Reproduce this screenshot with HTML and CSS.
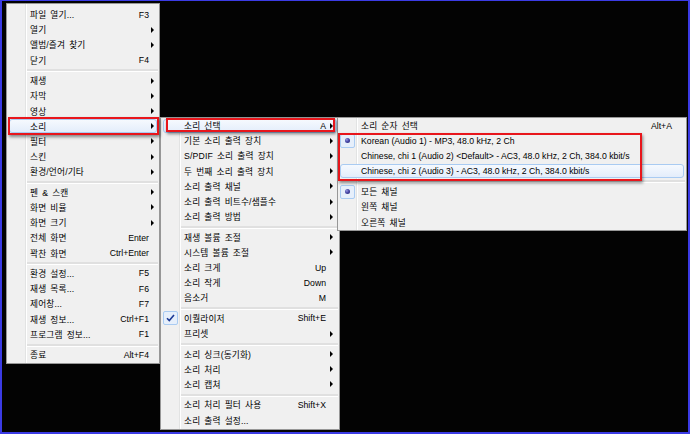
FILE: index.html
```html
<!DOCTYPE html>
<html lang="ko">
<head>
<meta charset="utf-8">
<title>메뉴</title>
<link rel="stylesheet" href="styles.css">
</head>
<body>
<div class="screen">
  <div class="menu m1">
    <div class="item"><span class="label">파일 열기...</span><span class="key">F3</span><span class="arr"></span></div>
    <div class="item sub"><span class="label">열기</span><span class="arr"></span></div>
    <div class="item sub"><span class="label">앨범/즐겨 찾기</span><span class="arr"></span></div>
    <div class="item"><span class="label">닫기</span><span class="key">F4</span><span class="arr"></span></div>
    <div class="sep"></div>
    <div class="item sub"><span class="label">재생</span><span class="arr"></span></div>
    <div class="item sub"><span class="label">자막</span><span class="arr"></span></div>
    <div class="item sub"><span class="label">영상</span><span class="arr"></span></div>
    <div class="item sub hot"><span class="label">소리</span><span class="arr"></span></div>
    <div class="item sub"><span class="label">필터</span><span class="arr"></span></div>
    <div class="item sub"><span class="label">스킨</span><span class="arr"></span></div>
    <div class="item sub"><span class="label">환경/언어/기타</span><span class="arr"></span></div>
    <div class="sep"></div>
    <div class="item sub"><span class="label">펜 &amp; 스캔</span><span class="arr"></span></div>
    <div class="item sub"><span class="label">화면 비율</span><span class="arr"></span></div>
    <div class="item sub"><span class="label">화면 크기</span><span class="arr"></span></div>
    <div class="item"><span class="label">전체 화면</span><span class="key">Enter</span><span class="arr"></span></div>
    <div class="item"><span class="label">꽉찬 화면</span><span class="key">Ctrl+Enter</span><span class="arr"></span></div>
    <div class="sep"></div>
    <div class="item"><span class="label">환경 설정...</span><span class="key">F5</span><span class="arr"></span></div>
    <div class="item"><span class="label">재생 목록...</span><span class="key">F6</span><span class="arr"></span></div>
    <div class="item"><span class="label">제어창...</span><span class="key">F7</span><span class="arr"></span></div>
    <div class="item"><span class="label">재생 정보...</span><span class="key">Ctrl+F1</span><span class="arr"></span></div>
    <div class="item"><span class="label">프로그램 정보...</span><span class="key">F1</span><span class="arr"></span></div>
    <div class="sep"></div>
    <div class="item"><span class="label">종료</span><span class="key">Alt+F4</span><span class="arr"></span></div>
  </div>

  <div class="menu m2">
    <div class="item sub hot"><span class="label">소리 선택</span><span class="key">A</span><span class="arr"></span></div>
    <div class="item sub"><span class="label">기본 소리 출력 장치</span><span class="arr"></span></div>
    <div class="item sub"><span class="label">S/PDIF 소리 출력 장치</span><span class="arr"></span></div>
    <div class="item sub"><span class="label">두 번째 소리 출력 장치</span><span class="arr"></span></div>
    <div class="item sub"><span class="label">소리 출력 채널</span><span class="arr"></span></div>
    <div class="item sub"><span class="label">소리 출력 비트수/샘플수</span><span class="arr"></span></div>
    <div class="item sub"><span class="label">소리 출력 방법</span><span class="arr"></span></div>
    <div class="sep"></div>
    <div class="item sub"><span class="label">재생 볼륨 조절</span><span class="arr"></span></div>
    <div class="item sub"><span class="label">시스템 볼륨 조절</span><span class="arr"></span></div>
    <div class="item"><span class="label">소리 크게</span><span class="key">Up</span><span class="arr"></span></div>
    <div class="item"><span class="label">소리 작게</span><span class="key">Down</span><span class="arr"></span></div>
    <div class="item"><span class="label">음소거</span><span class="key">M</span><span class="arr"></span></div>
    <div class="sep"></div>
    <div class="item"><span class="mark"><svg width="9" height="8" viewBox="0 0 9 8"><path d="M1 4.3 L3.3 6.6 L8 1" fill="none" stroke="#1c3a96" stroke-width="1.6"/></svg></span><span class="label">이퀄라이저</span><span class="key">Shift+E</span><span class="arr"></span></div>
    <div class="item sub"><span class="label">프리셋</span><span class="arr"></span></div>
    <div class="sep"></div>
    <div class="item sub"><span class="label">소리 싱크(동기화)</span><span class="arr"></span></div>
    <div class="item sub"><span class="label">소리 처리</span><span class="arr"></span></div>
    <div class="item sub"><span class="label">소리 캡쳐</span><span class="arr"></span></div>
    <div class="sep"></div>
    <div class="item"><span class="label">소리 처리 필터 사용</span><span class="key">Shift+X</span><span class="arr"></span></div>
    <div class="item"><span class="label">소리 출력 설정...</span><span class="arr"></span></div>
  </div>

  <div class="menu m3">
    <div class="item"><span class="label ko">소리 순자 선택</span><span class="key">Alt+A</span><span class="arr"></span></div>
    <div class="item"><span class="mark"><span class="dot"></span></span><span class="label">Korean (Audio 1) - MP3, 48.0 kHz, 2 Ch</span><span class="arr"></span></div>
    <div class="item"><span class="label">Chinese, chi 1 (Audio 2) &lt;Default&gt; - AC3, 48.0 kHz, 2 Ch, 384.0 kbit/s</span><span class="arr"></span></div>
    <div class="item hot"><span class="label">Chinese, chi 2 (Audio 3) - AC3, 48.0 kHz, 2 Ch, 384.0 kbit/s</span><span class="arr"></span></div>
    <div class="sep"></div>
    <div class="item"><span class="mark"><span class="dot"></span></span><span class="label ko">모든 채널</span><span class="arr"></span></div>
    <div class="item"><span class="label ko">왼쪽 채널</span><span class="arr"></span></div>
    <div class="item"><span class="label ko">오른쪽 채널</span><span class="arr"></span></div>
  </div>

  <div class="note n1"></div>
  <div class="note n2"></div>
  <div class="note n3"></div>
</div>
</body>
</html>
```

FILE: styles.css
```css
* { box-sizing: border-box; margin: 0; padding: 0; }
html, body { width: 690px; height: 434px; overflow: hidden; background: #000; }
body {
  font-family: "Liberation Sans", "Noto Sans CJK KR", sans-serif;
  font-size: 8.7px;
  color: #000;
}
.screen { position: relative; width: 690px; height: 434px; background: #030303; overflow: hidden; }
.screen::after {
  content: ""; position: absolute; inset: 0;
  border-style: solid; border-color: #3b3be4; border-width: 1px 2px 2px 2px;
  pointer-events: none; z-index: 10;
}

.menu {
  position: absolute;
  display: flex; flex-direction: column;
  border: 1px solid #979797;
  background:
    linear-gradient(to right, transparent 18px, #e2e3e3 18px, #e2e3e3 19px, #ffffff 19px, #ffffff 20px, transparent 20px),
    #f0f0f0;
}
.m1 { left: 6px; top: 3px; width: 154px; padding: 3px 0 0.4px; --aw: 10px; --ax: 2px; }
.m2 { left: 160px; top: 117px; width: 180px; padding: 0 0 1px; --aw: 13px; --ax: 4px; }
.m3 { left: 337px; top: 117px; width: 350px; padding: 0 0 0.3px; --aw: 14px; --ax: 4px; }

.item {
  position: relative;
  display: flex; align-items: center;
  height: 15.2px;
  padding-left: 23px;
  white-space: nowrap;
}
.label { flex: 1; position: relative; }
.m1 .label, .m2 .label, .m3 .ko { word-spacing: 1.5px; letter-spacing: 0.15px; }
.key { position: relative; }
.arr { position: relative; width: var(--aw); align-self: stretch; }
.sub .arr::after {
  content: ""; position: absolute; left: var(--ax); top: 50%; margin-top: -3px;
  border-left: 3px solid #000; border-top: 3px solid transparent; border-bottom: 3px solid transparent;
}

.hot::before {
  content: ""; position: absolute; left: 2px; right: 2px; top: 0.5px; bottom: 0.5px;
  border: 1px solid #a9cbf2; border-radius: 3px;
  background: linear-gradient(#f5f9fe, #e3edfb);
}

.sep { position: relative; height: 5.3px; margin: 0 1px 0 20px; }
.sep::after {
  content: ""; position: absolute; left: 0; right: 0; top: 1.7px; height: 2px;
  background: #e0e0e0; border-bottom: 1px solid #ffffff;
}

.mark {
  position: absolute; left: 2px; top: 0.5px; width: 15px; height: 14px;
  border: 1px solid #a9cbf2; border-radius: 2px;
  background: #e6effb;
  display: flex; align-items: center; justify-content: center;
}
.mark svg { display: block; }
.dot {
  width: 5px; height: 5px; border-radius: 50%;
  background: radial-gradient(circle at 35% 35%, #9a9ae0 0, #4848a8 45%, #20206e 100%);
}

.note {
  position: absolute;
  border: 2px solid #e8161c;
  box-shadow: 1px 2px 3px rgba(0, 0, 0, 0.45);
  z-index: 5;
}
.n1 { left: 8px; top: 117px; width: 151px; height: 18px; }
.n2 { left: 166px; top: 118px; width: 169px; height: 14px; }
.n3 { left: 338px; top: 133px; width: 304px; height: 48px; }
```
